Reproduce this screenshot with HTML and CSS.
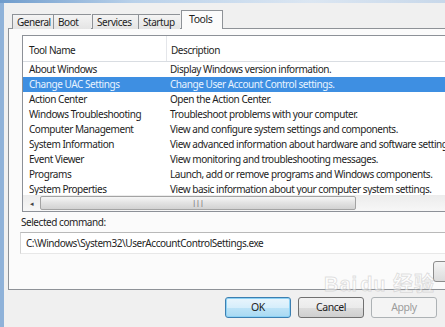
FILE: index.html
```html
<!DOCTYPE html>
<html lang="en">
<head>
    <meta charset="UTF-8">
    <title>System Configuration - Tools</title>
    <link rel="stylesheet" href="styles.css">
</head>
<body>
    <div class="window">
        <div class="title-edge"></div>
        <div class="dialog">
            <div class="tabs">
                <div class="tab tab-general">General</div>
                <div class="tab tab-boot">Boot</div>
                <div class="tab tab-services">Services</div>
                <div class="tab tab-startup">Startup</div>
                <div class="tab active">Tools</div>
            </div>

            <div class="panel">
                <div class="list">
                    <div class="list-head">
                        <div class="col-name">Tool Name</div>
                        <div class="col-desc">Description</div>
                    </div>
                    <div class="rows">
                        <div class="row"><div class="col-name">About Windows</div><div class="col-desc">Display Windows version information.</div></div>
                        <div class="row selected"><div class="col-name">Change UAC Settings</div><div class="col-desc">Change User Account Control settings.</div></div>
                        <div class="row"><div class="col-name">Action Center</div><div class="col-desc">Open the Action Center.</div></div>
                        <div class="row"><div class="col-name">Windows Troubleshooting</div><div class="col-desc">Troubleshoot problems with your computer.</div></div>
                        <div class="row"><div class="col-name">Computer Management</div><div class="col-desc">View and configure system settings and components.</div></div>
                        <div class="row"><div class="col-name">System Information</div><div class="col-desc">View advanced information about hardware and software settings.</div></div>
                        <div class="row"><div class="col-name">Event Viewer</div><div class="col-desc">View monitoring and troubleshooting messages.</div></div>
                        <div class="row"><div class="col-name">Programs</div><div class="col-desc">Launch, add or remove programs and Windows components.</div></div>
                        <div class="row"><div class="col-name">System Properties</div><div class="col-desc">View basic information about your computer system settings.</div></div>
                    </div>
                    <div class="hscroll">
                        <div class="arrow">&#9666;</div>
                        <div class="thumb"><span class="grip">|||</span></div>
                    </div>
                </div>

                <div class="cmd-label">Selected command:</div>
                <div class="cmd-box">C:\Windows\System32\UserAccountControlSettings.exe</div>
                <div class="launch-row"><div class="launch"></div></div>
            </div>

            <div class="buttons">
                <div class="btn ok">OK</div>
                <div class="btn">Cancel</div>
                <div class="btn disabled">Apply</div>
            </div>
        </div>

        <!-- watermark from the original screenshot -->
        <div class="watermark">Bai<span class="wm-du">du</span> 经验</div>
    </div>
</body>
</html>
```

FILE: styles.css
```css
body {
    margin: 0;
    font-family: "Noto Sans", "Noto Sans CJK SC", sans-serif;
    font-size: 10px;
    letter-spacing: -0.45px;
    color: #1e1e1e;
}
.window {
    position: relative;
    width: 445px;
    height: 327px;
    overflow: hidden;
    background: #f0f0f0;
}
.title-edge {
    height: 3px;
    background: linear-gradient(to right, #6f9ccc, #b9d1ea 30%, #dbe6f2 70%, #c8d8ea);
}
.dialog {
    height: 324px;
    border-left: 4px solid #8fb2d9;
    padding-left: 4px;
    box-sizing: border-box;
}
.tabs {
    display: flex;
    align-items: flex-end;
    height: 19px;
    padding-top: 7px;
    padding-left: 4px;
    margin-bottom: -1px;
    position: relative;
    z-index: 1;
}
.tab {
    height: 15px;
    line-height: 14px;
    padding-left: 4px;
    border: 1px solid #8e9297;
    border-bottom: none;
    border-right: none;
    background: linear-gradient(#f4f4f4, #e4e4e4);
    box-sizing: border-box;
    white-space: nowrap;
}
.tab-general {
    width: 41px;
}
.tab-boot {
    width: 38px;
}
.tab-services {
    width: 46px;
    margin-left: 1px;
}
.tab-startup {
    width: 42px;
}
.tab.active {
    width: 42px;
    height: 19px;
    line-height: 17px;
    padding-left: 7px;
    margin-left: 1px;
    border-right: 1px solid #8e9297;
    background: #fbfbfb;
    font-size: 10.5px;
}
.panel {
    width: 460px;
    height: 262px;
    border: 1px solid #8e9297;
    background: #fbfbfb;
    box-sizing: border-box;
    padding: 6px 0 0 13px;
}
.list {
    border: 1px solid #8d9198;
    background: #fff;
    width: 460px;
}
.list-head {
    display: flex;
    height: 25px;
    line-height: 29px;
    border-bottom: 1px solid #d9dde2;
}
.list-head .col-name {
    border-right: 1px solid #e4e6ea;
}
.col-name {
    width: 137px;
    padding-left: 6px;
    flex-shrink: 0;
    white-space: nowrap;
}
.col-desc {
    padding-left: 4px;
    white-space: nowrap;
}
.rows {
    height: 133px;
    overflow: hidden;
}
.row {
    display: flex;
    height: 15px;
    line-height: 15px;
}
.row.selected {
    background: #3e8fe2;
    color: #e8f3ff;
}
.hscroll {
    display: flex;
    align-items: center;
    height: 16px;
    background: linear-gradient(#ececec, #f7f7f7);
}
.arrow {
    width: 17px;
    text-align: center;
    font-size: 7px;
    color: #444;
}
.thumb {
    width: 316px;
    height: 14px;
    border: 1px solid #a3a3a3;
    border-radius: 2px;
    background: linear-gradient(#f6f6f6, #e2e2e2 50%, #d2d2d2);
    box-sizing: border-box;
    text-align: center;
    line-height: 12px;
    font-size: 7px;
    letter-spacing: 0;
    color: #555;
}
.cmd-label {
    height: 14px;
    line-height: 14px;
    margin: 3px 0 3px -1px;
}
.cmd-box {
    width: 440px;
    height: 22px;
    line-height: 21px;
    margin-left: -2px;
    padding-left: 5px;
    border-top: 1px solid #b9b9b9;
    border-left: 1px solid #d4d4d4;
    border-bottom: 1px solid #e8e8e8;
    background: #fff;
    box-sizing: border-box;
}
.launch-row {
    display: flex;
    margin-top: 7px;
}
.launch {
    width: 30px;
    height: 19px;
    margin-left: 411px;
    border: 1px solid #8c8c8c;
    border-radius: 3px;
    background: linear-gradient(#f4f4f4, #dcdcdc);
}
.buttons {
    display: flex;
    gap: 7px;
    padding: 7px 0 0 217px;
}
.btn {
    width: 66px;
    height: 21px;
    line-height: 19px;
    text-align: center;
    border: 1px solid #707070;
    border-radius: 3px;
    background: linear-gradient(#f2f2f2, #ebebeb 50%, #dddddd 51%, #cfcfcf);
    box-sizing: border-box;
    font-size: 10.5px;
}
.btn.ok {
    border-color: #3c7fb1;
    background: linear-gradient(#e9f5fc, #d6eefb 50%, #bde3f7 51%, #a8d9f2);
    box-shadow: inset 0 0 0 1px #8dd2f5;
}
.btn.disabled {
    border-color: #adb2b5;
    background: #f4f4f4;
    color: #9c9c9c;
}
.watermark {
    position: absolute;
    left: 324px;
    top: 268px;
    white-space: nowrap;
    font-family: "Liberation Sans", "Noto Sans CJK SC", sans-serif;
    font-size: 20px;
    font-weight: bold;
    color: rgba(255, 255, 255, 0.5);
    -webkit-text-stroke: 1px rgba(150, 150, 150, 0.28);
    letter-spacing: 1px;
}
.wm-du {
    margin-left: 2px;
}
```
